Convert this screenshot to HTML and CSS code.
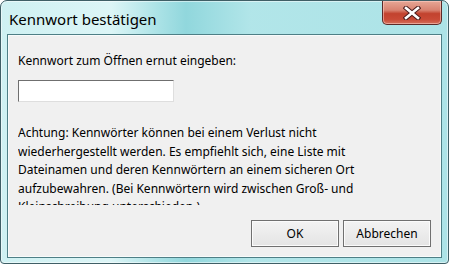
FILE: index.html
```html
<!DOCTYPE html>
<html lang="de">
<head>
<meta charset="utf-8">
<link rel="stylesheet" href="styles.css">
</head>
<body>
<div class="window">
  <div class="titlebar">
    <div class="title">Kennwort bestätigen</div>
    <div class="close">
      <svg width="18" height="14" viewBox="0 0 18 14">
        <path d="M3 2 L15 12 M15 2 L3 12" stroke="#4a1c1c" stroke-width="4.6" stroke-linecap="square"/>
        <path d="M3 2 L15 12 M15 2 L3 12" stroke="#ffffff" stroke-width="2.6" stroke-linecap="square"/>
      </svg>
    </div>
  </div>
  <div class="client">
    <div class="label">Kennwort zum Öffnen ernut eingeben:</div>
    <div class="field"></div>
    <div class="note">Achtung: Kennwörter können bei einem Verlust nicht wiederhergestellt werden. Es empfiehlt sich, eine Liste mit Dateinamen und deren Kennwörtern an einem sicheren Ort aufzubewahren. (Bei Kennwörtern wird zwischen Groß- und Kleinschreibung unterschieden.)</div>
    <div class="buttons">
      <div class="btn">OK</div>
      <div class="btn">Abbrechen</div>
    </div>
  </div>
</div>
</body>
</html>
```

FILE: styles.css
```css
html, body {
  margin: 0;
  padding: 0;
  background: #ffffff;
}
body {
  width: 449px;
  height: 265px;
  overflow: hidden;
  font-family: "Noto Sans", "Open Sans", sans-serif;
}
.window {
  box-sizing: border-box;
  width: 449px;
  height: 264px;
  border: 1px solid #3f5f66;
  border-radius: 7px 7px 4px 4px;
  background:
    linear-gradient(90deg, rgba(232,251,251,0.6) 0px, rgba(238,252,252,0.75) 110px, rgba(150,215,220,0.0) 160px, rgba(110,200,208,0.4) 185px, rgba(200,240,242,0.3) 250px, rgba(190,236,238,0.2) 449px),
    #a8e1e5;
  display: flex;
  flex-direction: column;
  box-shadow: inset 0 0 0 1px rgba(255,255,255,0.5);
}
.titlebar {
  height: 33px;
  display: flex;
  align-items: flex-start;
  justify-content: space-between;
}
.title {
  font-family: "Noto Sans", "Open Sans", sans-serif;
  font-size: 15px;
  color: #000;
  padding: 8px 0 0 8px;
  line-height: 20px;
}
.close {
  width: 58px;
  height: 23px;
  margin-right: 6px;
  border: 1px solid #5b2a28;
  border-top: none;
  border-radius: 0 0 5px 5px;
  background: linear-gradient(#e6a796 0%, #d88270 40%, #c2422e 55%, #c94a36 80%, #d3705c 100%);
  box-shadow: inset 0 0 0 1px rgba(255,210,200,0.55);
  display: flex;
  align-items: center;
  justify-content: center;
}
.client {
  flex: 1;
  margin: 0 6px 5px 6px;
  border: 1px solid #4e7f86;
  box-shadow: inset 0 0 0 1px #f8fbfb;
  background: #f0f0f0;
  display: flex;
  flex-direction: column;
  padding: 18px 10px 10px 10px;
  font-size: 12px;
  color: #000;
}
.label {
  line-height: 16px;
  height: 16px;
}
.field {
  width: 154px;
  height: 20px;
  margin-top: 11px;
  background: #fff;
  border-top: 1px solid #6f6f6f;
  border-left: 1px solid #6f6f6f;
  border-right: 1px solid #dedede;
  border-bottom: 1px solid #dedede;
}
.note {
  margin-top: 22px;
  line-height: 18.5px;
  height: 81px;
  overflow: hidden;
  width: 380px;
}
.buttons {
  margin-top: auto;
  display: flex;
  justify-content: flex-end;
  gap: 4px;
}
.btn {
  box-sizing: border-box;
  width: 88px;
  height: 27px;
  border: 1px solid #707070;
  background: linear-gradient(#f3f3f3, #e4e4e4);
  box-shadow: inset 0 0 0 1px #fbfbfb;
  display: flex;
  align-items: center;
  justify-content: center;
  font-size: 12px;
}
```
